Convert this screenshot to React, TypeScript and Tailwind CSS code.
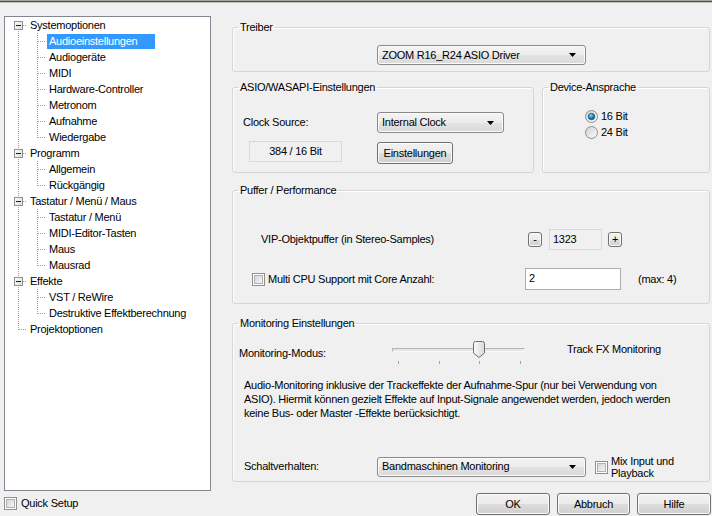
import React from "react"

type Node = { label: string; children: string[] }

const tree: Node[] = [
  {
    label: "Systemoptionen",
    children: ["Audioeinstellungen", "Audiogeräte", "MIDI", "Hardware-Controller", "Metronom", "Aufnahme", "Wiedergabe"],
  },
  { label: "Programm", children: ["Allgemein", "Rückgängig"] },
  { label: "Tastatur / Menü / Maus", children: ["Tastatur / Menü", "MIDI-Editor-Tasten", "Maus", "Mausrad"] },
  { label: "Effekte", children: ["VST / ReWire", "Destruktive Effektberechnung"] },
  { label: "Projektoptionen", children: [] },
]

const dot = { stroke: "#a0a0a0", strokeWidth: 1, strokeDasharray: "1 1", shapeRendering: "crispEdges" as const }

const RootGutter = ({ first, last, open }: { first: boolean; last: boolean; open: boolean }) => (
  <svg width="23" height="16" className="shrink-0">
    <line x1="13.5" y1={first ? 8 : 0} x2="13.5" y2={last ? 9 : 16} {...dot} />
    <line x1="14" y1="8.5" x2="22" y2="8.5" {...dot} />
    {open && (
      <>
        <defs>
          <linearGradient id="bx" x1="0" y1="0" x2="1" y2="1">
            <stop offset="0" stopColor="#ffffff" />
            <stop offset="1" stopColor="#d8d8d8" />
          </linearGradient>
        </defs>
        <rect x="9.5" y="4.5" width="8" height="8" fill="url(#bx)" stroke="#919191" shapeRendering="crispEdges" />
        <line x1="11" y1="8.5" x2="16" y2="8.5" stroke="#1e1e1e" shapeRendering="crispEdges" />
      </>
    )}
  </svg>
)

const ChildGutter = ({ lastChild }: { lastChild: boolean }) => (
  <svg width="42" height="16" className="shrink-0">
    <line x1="13.5" y1="0" x2="13.5" y2="16" {...dot} />
    <line x1="32.5" y1="0" x2="32.5" y2={lastChild ? 9 : 16} {...dot} />
    <line x1="33" y1="8.5" x2="41" y2="8.5" {...dot} />
  </svg>
)

const Tree = () => (
  <div className="mt-[13px] h-[475px] border border-[#828790] bg-white">
    {tree.map((n, i) => (
      <div key={n.label}>
        <div className="flex h-[16px] items-center">
          <RootGutter first={i === 0} last={i === tree.length - 1} open={n.children.length > 0} />
          <span className="px-[2px] leading-[13px] whitespace-nowrap">{n.label}</span>
        </div>
        {n.children.map((c, j) => (
          <div key={c} className="flex h-[16px] items-center">
            <ChildGutter lastChild={j === n.children.length - 1} />
            {c === "Audioeinstellungen" ? (
              <span className="flex h-[15px] w-[108px] items-center bg-[#3399ff] px-[2px] text-white whitespace-nowrap">{c}</span>
            ) : (
              <span className="px-[2px] leading-[13px] whitespace-nowrap">{c}</span>
            )}
          </div>
        ))}
      </div>
    ))}
  </div>
)

const btnBg =
  "bg-[linear-gradient(#f2f2f2_0%,#ebebeb_50%,#dddddd_51%,#cfcfcf_100%)] shadow-[inset_0_0_0_1px_#fbfbfb]"

const Button = ({ children, className = "" }: { children: React.ReactNode; className?: string }) => (
  <div className={`flex items-center justify-center rounded-[3px] border border-[#707070] ${btnBg} ${className}`}>
    {children}
  </div>
)

const Combo = ({ text, className = "" }: { text: string; className?: string }) => (
  <div
    className={`flex items-center justify-between rounded-[3px] border border-[#8a8a8a] bg-[linear-gradient(#f4f4f4_0%,#ececec_50%,#e2e2e2_51%,#dadada_100%)] pl-[4px] pr-[9px] shadow-[inset_0_0_0_1px_#fbfbfb] ${className}`}
  >
    <span className="whitespace-nowrap">{text}</span>
    <svg width="7" height="4" viewBox="0 0 7 4">
      <path d="M0 0H7L3.5 4Z" fill="#000" />
    </svg>
  </div>
)

const Checkbox = () => (
  <div className="h-[13px] w-[13px] shrink-0 border border-[#8e8f8f] bg-white p-[1px]">
    <div className="h-full w-full border border-[#b0b0b0] bg-[linear-gradient(135deg,#d6d6d6,#f4f4f4)]" />
  </div>
)

const Radio = ({ checked }: { checked?: boolean }) => (
  <svg width="13" height="13" viewBox="0 0 13 13" className="shrink-0">
    <defs>
      <linearGradient id="rbg" x1="0" y1="0" x2="1" y2="1">
        <stop offset="0" stopColor="#d0d0d0" />
        <stop offset="1" stopColor="#fbfbfb" />
      </linearGradient>
      <radialGradient id="rdot" cx="0.4" cy="0.35" r="0.7">
        <stop offset="0" stopColor="#8fd2f6" />
        <stop offset="0.5" stopColor="#2a8ac7" />
        <stop offset="1" stopColor="#0d3f66" />
      </radialGradient>
    </defs>
    <circle cx="6.5" cy="6.5" r="6" fill="url(#rbg)" stroke="#8e8f8f" />
    {checked && <circle cx="6.5" cy="6.5" r="3.3" fill="url(#rdot)" stroke="#1b4f78" strokeWidth="0.6" />}
  </svg>
)

const Group = ({ title, className = "", children }: { title: string; className?: string; children: React.ReactNode }) => (
  <fieldset className={`rounded-[3px] border border-[#d5d5d5] shadow-[inset_1px_1px_0_#fff] ${className}`}>
    <legend className="ml-[5px] px-[2px] leading-[13px]">{title}</legend>
    {children}
  </fieldset>
)

export default function App() {
  return (
    <div className="flex h-[516px] w-[712px] flex-col overflow-hidden bg-[#f0f0f0] font-['Liberation_Sans',Arial,sans-serif] text-[11px] tracking-[-0.25px] text-black">
      <div className="h-[1px] bg-[#a8a29a]" />
      <div className="h-[1px] bg-[#4e4e4e]" />
      <div className="h-[1px] bg-[#c4c4c4]" />
      <div className="flex flex-1">
        <div className="ml-[4px] flex w-[207px] flex-col">
          <Tree />
          <div className="mt-[6px] flex h-[12px] items-center gap-[4px]">
            <Checkbox />
            <span>Quick Setup</span>
          </div>
        </div>

        <div className="ml-[21px] flex w-[480px] flex-col">
          <Group title="Treiber" className="mt-[18px] h-[51px] w-[478px]">
            <Combo text="ZOOM R16_R24 ASIO Driver" className="mt-[11px] ml-[144px] h-[20px] w-[209px]" />
          </Group>

          <div className="mt-[9px] flex">
            <Group title="ASIO/WASAPI-Einstellungen" className="h-[92px] w-[302px]">
              <div className="mt-[18px] flex h-[21px] items-center">
                <span className="w-[144px] pl-[10px]">Clock Source:</span>
                <Combo text="Internal Clock" className="h-[21px] w-[127px]" />
              </div>
              <div className="mt-[8px] flex items-start">
                <div className="ml-[16px] flex h-[21px] w-[93px] items-center justify-center border border-[#d9d9d9] bg-[#f0f0f0]">
                  384 / 16 Bit
                </div>
                <Button className="mt-[1px] ml-[35px] h-[22px] w-[76px]">Einstellungen</Button>
              </div>
            </Group>
            <Group title="Device-Ansprache" className="ml-[8px] h-[92px] w-[168px]">
              <div className="mt-[14px] ml-[42px] flex flex-col">
                <div className="flex h-[16px] items-center gap-[3px]">
                  <Radio checked />
                  <span>16 Bit</span>
                </div>
                <div className="flex h-[16px] items-center gap-[3px]">
                  <Radio />
                  <span>24 Bit</span>
                </div>
              </div>
            </Group>
          </div>

          <Group title="Puffer / Performance" className="mt-[11px] h-[120px] w-[478px]">
            <div className="mt-[32px] flex h-[21px] items-center">
              <span className="w-[295px] pl-[28px]">VIP-Objektpuffer (in Stereo-Samples)</span>
              <Button className="h-[15px] w-[14px] leading-none">-</Button>
              <div className="ml-[7px] flex h-[21px] w-[53px] items-center border border-[#d9d9d9] bg-[#f0f0f0] pl-[3px]">1323</div>
              <Button className="ml-[6px] h-[15px] w-[14px] leading-none">+</Button>
            </div>
            <div className="mt-[18px] flex h-[22px] items-center">
              <div className="flex w-[292px] items-center pl-[19px]">
                <Checkbox />
                <span className="ml-[3px]">Multi CPU Support mit Core Anzahl:</span>
              </div>
              <div className="h-[22px] w-[96px] border border-[#abadb3] bg-white pl-[3px] pt-[1px]">2</div>
              <span className="ml-[17px]">(max: 4)</span>
            </div>
          </Group>

          <Group title="Monitoring Einstellungen" className="mt-[13px] h-[165px] w-[478px]">
            <div className="mt-[11px] flex items-center">
              <span className="w-[159px] pl-[6px]">Monitoring-Modus:</span>
              <div className="flex w-[133px] flex-col">
                <div className="relative flex h-[17px] items-center">
                  <div className="h-[4px] w-full rounded-[1px] border border-[#b4b4b4] border-r-[#f8f8f8] border-b-[#f8f8f8] bg-[#e6e6e6]" />
                  <svg width="12" height="17" viewBox="0 0 12 17" className="absolute top-0 left-[81px]">
                    <defs>
                      <linearGradient id="th" x1="0" y1="0" x2="1" y2="0">
                        <stop offset="0" stopColor="#fafafa" />
                        <stop offset="1" stopColor="#d9d9d9" />
                      </linearGradient>
                    </defs>
                    <path d="M0.5 2.5Q0.5 0.5 2.5 0.5H9.5Q11.5 0.5 11.5 2.5V12L6 16.5L0.5 12Z" fill="url(#th)" stroke="#6f6f6f" />
                  </svg>
                </div>
                <div className="mt-[3px] ml-[6px] flex h-[3px] w-[123px] justify-between">
                  <div className="w-[1px] bg-[#a0a0a0]" />
                  <div className="w-[1px] bg-[#a0a0a0]" />
                  <div className="w-[1px] bg-[#a0a0a0]" />
                  <div className="w-[1px] bg-[#a0a0a0]" />
                </div>
              </div>
              <span className="mb-[7px] ml-[42px] self-start whitespace-nowrap">Track FX Monitoring</span>
            </div>
            <p className="mt-[13px] pl-[11px] leading-[14px] whitespace-nowrap">
              Audio-Monitoring inklusive der Trackeffekte der Aufnahme-Spur (nur bei Verwendung von
              <br />
              ASIO). Hiermit können gezielt Effekte auf Input-Signale angewendet werden, jedoch werden
              <br />
              keine Bus- oder Master -Effekte berücksichtigt.
            </p>
            <div className="mt-[37px] flex h-[20px] items-center">
              <span className="w-[144px] pl-[11px]">Schaltverhalten:</span>
              <Combo text="Bandmaschinen Monitoring" className="h-[20px] w-[209px]" />
              <div className="ml-[9px] mt-[2px]">
                <Checkbox />
              </div>
              <span className="ml-[3px] leading-[12px]">
                Mix Input und
                <br />
                Playback
              </span>
            </div>
          </Group>

          <div className="mt-[11px] flex justify-end gap-[7px] pr-[1px]">
            <Button className="h-[22px] w-[74px]">OK</Button>
            <Button className="h-[22px] w-[73px]">Abbruch</Button>
            <Button className="h-[22px] w-[74px]">Hilfe</Button>
          </div>
        </div>
      </div>
    </div>
  )
}
